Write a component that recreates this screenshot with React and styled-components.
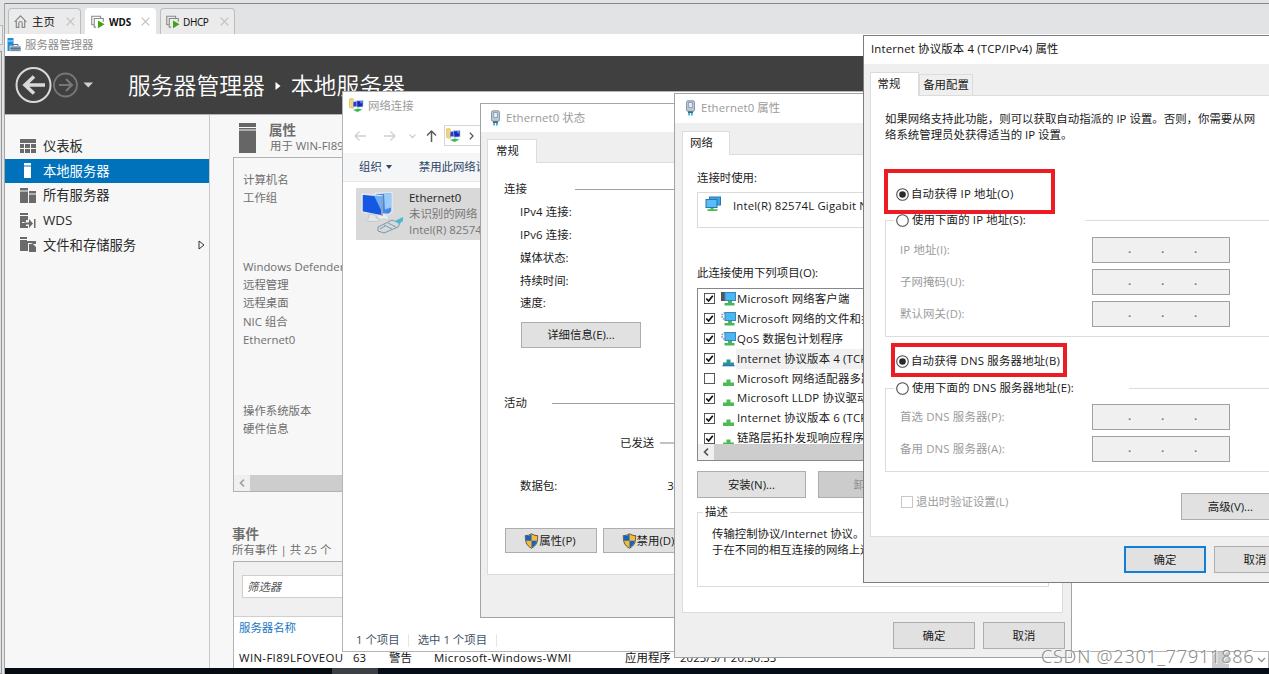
import React from "react";
import styled, { createGlobalStyle } from "styled-components";

const Global = createGlobalStyle`
  * {
    box-sizing: border-box;
  }

  body {
    margin: 0;
    overflow: hidden;
  }
`;

const Screen = styled.div`
  position: relative;
  display: flex;
  width: 1269px;
  height: 674px;
  overflow: hidden;
  background: #e2e3e5;
  color: #1a1a1a;
  font-family: "Open Sans", "Noto Sans CJK SC", sans-serif;
  font-size: 11.4px;
  line-height: 16px;
  white-space: nowrap;

  svg {
    display: block;
    flex: none;
  }
`;

/* ---------- shared ---------- */

const Text = styled.div`
  flex: none;
  height: 16px;
  line-height: 16px;
  margin-top: ${p => p.$mt || 0}px;
  margin-left: ${p => p.$ml || 0}px;
  color: ${p => p.$color || "inherit"};
  letter-spacing: ${p => p.$ls || 0}px;
`;

const Row = styled.div`
  display: flex;
  flex: none;
  align-items: ${p => p.$align || "flex-start"};
  height: ${p => (p.$h ? `${p.$h}px` : "auto")};
  margin-top: ${p => p.$mt || 0}px;
  padding-left: ${p => p.$pl || 0}px;
  gap: ${p => p.$gap || 0}px;
  letter-spacing: ${p => p.$ls || 0}px;
`;

const Button = styled.div`
  display: flex;
  flex: none;
  align-items: center;
  justify-content: center;
  width: ${p => p.$w}px;
  height: ${p => p.$h || 27}px;
  padding-right: ${p => p.$pr || 0}px;
  border: ${p => (p.$primary ? "2px solid #0f7fd8" : "1px solid #adadad")};
  background: ${p => (p.$disabled ? "#cccccc" : "#e1e1e1")};
  color: ${p => (p.$disabled ? "#8e8e8e" : "inherit")};
`;

const Window = styled.div`
  position: absolute;
  left: ${p => p.$x}px;
  top: ${p => p.$y}px;
  width: ${p => p.$w}px;
  height: ${p => p.$h}px;
  display: flex;
  flex-direction: column;
  border: 1px solid ${p => p.$edge || "#a3a3a3"};
  background: ${p => p.$bg || "#efefef"};
`;

const TitleBar = styled.div`
  display: flex;
  flex: none;
  align-items: center;
  gap: ${p => p.$gap || 6}px;
  height: ${p => p.$h}px;
  padding: 0 0 ${p => p.$pb || 0}px ${p => p.$pl}px;
  background: #fff;
  color: ${p => p.$color || "#9a9a9a"};
  letter-spacing: ${p => p.$ls || 0}px;
`;

const Tabs = styled.div`
  display: flex;
  flex: none;
  align-items: flex-end;
  height: ${p => p.$h}px;
  padding-left: ${p => p.$pl}px;
`;

const Tab = styled.div`
  display: flex;
  justify-content: center;
  align-items: center;
  position: relative;
  width: ${p => p.$w}px;
  height: ${p => p.$h || 24}px;
  margin-bottom: ${p => (p.$off ? 0 : -1)}px;
  padding: 0 ${p => p.$pr || 0}px ${p => (p.$off ? 0 : 2)}px 0;
  border: 1px solid #dcdcdc;
  border-bottom: 0;
  background: ${p => (p.$off ? "#efefef" : "#fff")};
`;

const Page = styled.div`
  display: flex;
  flex: none;
  flex-direction: column;
  width: ${p => p.$w}px;
  height: ${p => p.$h}px;
  margin-left: ${p => p.$ml}px;
  padding-left: ${p => p.$pl || 0}px;
  border: 1px solid #dcdcdc;
  background: #fff;
`;

const Rule = styled.div`
  flex: 1;
  height: ${p => p.$h || 1}px;
  margin-left: ${p => p.$ml}px;
  background: ${p => p.$color || "#a0a0a0"};
`;

const CheckBox = ({ on, faint, size = 12 }) =>
  <svg width={size} height={size} viewBox="0 0 12 12">
    <rect x="0.5" y="0.5" width="11" height="11" fill="#fff" stroke={faint ? "#c8c8c8" : "#4a4a4a"} />
    {on && <path d="M2.5 6l2.5 2.7L9.6 3" fill="none" stroke="#111" strokeWidth="1.9" />}
  </svg>;

const Radio = ({ on }) =>
  <svg width="13" height="13" viewBox="0 0 13 13">
    <circle cx="6.5" cy="6.5" r="5.8" fill="#fff" stroke="#4d4d4d" strokeWidth="1.1" />
    {on && <circle cx="6.5" cy="6.5" r="3.3" fill="#2a2a2a" />}
  </svg>;

const Shield = () =>
  <svg width="15" height="16" viewBox="0 0 14 16">
    <path d="M7 .7C5 2.2 3 2.6.8 2.6c0 6 .8 9.8 6.2 12.6 5.4-2.8 6.2-6.6 6.2-12.6C11 2.6 9 2.2 7 .7z" fill="#fbb92c" stroke="#555" />
    <path d="M7 1.4C5.2 2.6 3.3 3 1.3 3.1c0 1.8.1 3.400.400 4.600H7zM7 7.700h5.300c-.6 3.200-2 5.200-5.300 6.900z" fill="#1565c0" />
  </svg>;

const PlugIcon = () =>
  <svg width="11" height="16" viewBox="0 0 11 16">
    <rect x="1.5" y="0.8" width="8" height="10.5" rx="1.5" fill="#b9c7d6" stroke="#8797a9" />
    <rect x="3.7" y="2.5" width="3.6" height="5" fill="#e6edf3" stroke="#8496aa" strokeWidth=".8" />
    <path d="M3 11.3h5V13H3z" fill="#4b6378" />
    <path d="M3.2 13h1.8v2.5H3.2zM6 13h1.8v2.5H6z" fill="#35b4e4" />
  </svg>;

const NetFolder = () =>
  <svg width="15" height="15" viewBox="0 0 15 15">
    <path d="M.5 1l3-.8 1 1.2v9L.5 9.5z" fill="#f3d678" stroke="#d5b656" strokeWidth=".6" />
    <path d="M4 4l5-1.5v6L4 9z" fill="#2a3fc0" stroke="#cfd8e2" strokeWidth=".7" />
    <path d="M7.500 3l6.500-.5v6.300l-6 .4z" fill="#1528c4" stroke="#bcc8d6" strokeWidth=".7" />
    <path d="M11 3.200l2.500-.2-1.500 3z" fill="#62a8f3" />
    <path d="M4 12l5-1.500 4.500 1-5 2.500z" fill="#37b95a" />
  </svg>;

const NicIcon = () =>
  <svg width="16" height="16" viewBox="0 0 16 16">
    <rect x="4.5" y="1" width="11" height="8" fill="#3ea5ea" stroke="#2877b0" />
    <rect x="1" y="3.5" width="11" height="8" fill="#5bbcf7" stroke="#2877b0" />
    <path d="M5.5 12h3v1.200h4v1.800h-10v-1.800h3z" fill="#46bd55" />
  </svg>;

/* ---------- virtual machine console ---------- */

const Gutter = styled.div`
  display: flex;
  flex: none;
  flex-direction: column;
  width: 5px;
`;

const GutterTab = styled.div`
  width: 3px;
  height: 20px;
  margin-top: 25px;
  border: 1px solid #b7b8ba;
  border-left: 0;
  background: #ececec;
`;

const GutterPane = styled.div`
  flex: 1;
  width: 2px;
  margin-top: 6px;
  border: 1px solid #97989a;
  border-left: 0;
  background: #dfe1e4;
`;

const Console = styled.div`
  display: flex;
  flex: 1;
  flex-direction: column;
  margin-top: 3px;
  border-top: 1px solid #85868a;
  box-shadow: -1px 0 0 #a3a4a6;
`;

const ConsoleTabs = styled.div`
  display: flex;
  align-items: flex-end;
  gap: 4px;
  height: 30px;
  padding-left: 3px;
`;

const ConsoleTab = styled.div`
  display: flex;
  align-items: center;
  width: ${p => p.$w}px;
  height: 26px;
  padding: 0 5px;
  gap: ${p => p.$gap || 5}px;
  border: 1px solid ${p => (p.$active ? "#fff" : "#bcbdbf")};
  border-bottom: 0;
  border-radius: 4px 4px 0 0;
  background: ${p => (p.$active ? "#fff" : "#ebebec")};
  color: #111;
  font-size: ${p => p.$size || 11.4}px;
  font-family: "Noto Sans", "Noto Sans CJK SC", sans-serif;
  font-weight: ${p => (p.$active ? 700 : 400)};

  span {
    flex: 1;
    letter-spacing: ${p => p.$ls || 0}px;
  }
`;

const Close = () =>
  <svg width="9" height="9" viewBox="0 0 9 9">
    <path d="M.7.7l7.6 7.6M8.3.7L.7 8.300" stroke="#c0c0c0" strokeWidth="1.200" />
  </svg>;

const HomeIcon = () =>
  <svg width="13" height="13" viewBox="0 0 13 13" fill="none" stroke="#8a8a8a" strokeWidth="1.200">
    <path d="M.6 6.8L6.5.9l5.9 5.900M2.300 5.500v6.800h2.500V8c0-2 3.400-2 3.400 0v4.300h2.500V5.500" />
  </svg>;

const VmIcon = () =>
  <svg width="14" height="14" viewBox="0 0 15 14">
    <path d="M3 10H.8V.8h9.500V3M5.500 12.500h-2V3.300h9.700v3.500" fill="none" stroke="#8a8a8a" strokeWidth="1.200" />
    <path d="M7.500 5.300l7 4.200-7 4.200z" fill="#41a317" />
  </svg>;

const AppTitle = styled.div`
  display: flex;
  flex: none;
  align-items: center;
  height: 22px;
  padding-left: 2px;
  gap: 4px;
  background: #fff;
  color: #8c8c8c;
`;

const Banner = styled.div`
  display: flex;
  flex: none;
  align-items: center;
  height: 59px;
  padding-left: 9px;
  border-bottom: 1px solid #b5b5b5;
  background: #404040;
  color: #fff;
  font-size: 22.8px;
  font-weight: 350;
  line-height: 30px;
`;

const Crumb = styled.div`
  display: flex;
  align-items: center;
  margin-left: 34px;
  padding-top: 1px;
  gap: 10px;
`;

const Body = styled.div`
  display: flex;
  flex: 1;
  min-height: 0;
  background: #f7f7f7;
`;

const Sidebar = styled.div`
  display: flex;
  flex: none;
  flex-direction: column;
  width: 205px;
  padding-top: 19px;
  border-right: 1px solid #c9c9c9;
`;

const NavItem = styled.div`
  display: flex;
  align-items: center;
  flex: none;
  height: 24.6px;
  padding: 0 4px 0 15px;
  gap: 7px;
  background: ${p => (p.$active ? "#0072bc" : "transparent")};
  color: ${p => (p.$active ? "#fff" : "#2a2a2a")};
  font-size: 13.3px;

  span {
    flex: 1;
  }
`;

const Main = styled.div`
  display: flex;
  flex: 1;
  flex-direction: column;
  padding: 7px 0 0 23px;
  color: #6e6e6e;
`;

const Heading = styled.div`
  height: 16px;
  margin-left: -1px;
  font-size: 13.5px;
  font-weight: 700;
  line-height: 16px;
`;

const PropBox = styled.div`
  display: flex;
  flex: none;
  flex-direction: column;
  height: 335px;
  margin-top: 3px;
  border: 1px solid #b2b2b2;
`;

const PropList = styled.div`
  flex: 1;
  padding: 13px 0 0 9px;
  line-height: 18.2px;
`;

const Gap = styled.div`
  height: ${p => p.$h}px;
`;

const HScroll = styled.div`
  display: flex;
  flex: none;
  height: 16px;
  background: #cdcdcd;
`;

const ScrollEnd = styled.div`
  display: flex;
  align-items: center;
  justify-content: center;
  width: 16px;
  background: #f0f0f0;
`;

const ChevronLeft = ({ color = "#555" }) =>
  <svg width="6" height="8" viewBox="0 0 6 8">
    <path d="M5 .6L1.500 4 5 7.400" fill="none" stroke={color} strokeWidth="1.600" />
  </svg>;

const EventBox = styled.div`
  display: flex;
  flex: 1;
  flex-direction: column;
  margin-top: 3px;
  border: 1px solid #b2b2b2;
  border-bottom: 0;
  background: #fff;
`;

const Filter = styled.div`
  height: 55px;
  flex: none;
  padding: 13px 0 0 8px;
  border-bottom: 1px solid #cfcfcf;
  background: #f0f0f0;
`;

const FilterInput = styled.div`
  height: 23px;
  padding: 3px 4px;
  border: 1px solid #cfcfcf;
  background: #fff;
  color: #555;
  font-style: italic;
`;

const EventRow = styled.div`
  display: grid;
  grid-template-columns: 114px 36px 45px 191px 55px 532px auto;
  height: 18px;
  margin-top: 14px;
  padding-left: 5px;
  color: #111;

  span {
    letter-spacing: 0.05px;
  }

  span:nth-child(1),
  span:nth-child(4) {
    letter-spacing: 0.36px;
  }
`;

const ScrollThumb = styled.div`
  width: 17px;
  height: 18px;
  background: #cdcdcd;
`;

const Taskbar = styled.div`
  flex: none;
  height: 6px;
  background: linear-gradient(90deg, #050b10 0 327px, #3c4045 327px 373px, #050d18 373px);
`;

const navIcons = {
  board: <path d="M0 0h16v4H0zM0 5h4v4H0zM5 5h5v4H5zM11 5h5v4h-5zM0 10h4v4H0zM5 10h5v4H5zM11 10h5v4h-5z" />,
  local: <path d="M4 0h7v2.500H4zM4 3.500h7v11.500H4z" />,
  all: <path d="M0 0h8v2.500H0zM0 3.500h8v11.500H0zM9 3h7v2.500H9zM9 6.500h7v8.500H9z" />,
  wds: <path d="M0 0h8v2H0zM0 3h8v4H6v2H2v1h4v3h2v2H0zM4 9.500h5V6l4 4.500-4 4.500v-3.500H4zM14 6h1.500v9H14z" />,
  files: <path d="M0 0h7v2H0zM0 3h7v1h9v3h-3l-2-1H8v8H0zM9 7h4l3 3v5H9z" />
};

const nav = [
  ["board", "仪表板"],
  ["local", "本地服务器"],
  ["all", "所有服务器"],
  ["wds", "WDS"],
  ["files", "文件和存储服务"]
];

const ServerManager = () =>
  <Console>
    <ConsoleTabs>
      <ConsoleTab $w={73}><HomeIcon /><span>主页</span><Close /></ConsoleTab>
      <ConsoleTab $w={71} $active $size={9.9} $gap={4}><VmIcon /><span>WDS</span><Close /></ConsoleTab>
      <ConsoleTab $w={75} $size={10} $gap={3} $ls={-0.4}><VmIcon /><span>DHCP</span><Close /></ConsoleTab>
    </ConsoleTabs>
    <AppTitle>
      <svg width="14" height="14" viewBox="0 0 14 14">
        <path d="M.5 0h6v13h-6z" fill="#1e8fd6" />
        <path d="M.5 3h6" stroke="#bfe2f7" />
        <path d="M3 8h11v5.500H3z" fill="#7b93a8" stroke="#fff" strokeWidth=".6" />
        <path d="M6 8V6.500h5V8M3.500 10.500h10" fill="none" stroke="#5d7488" />
      </svg>
      服务器管理器
    </AppTitle>
    <Banner>
      <svg width="80" height="38" viewBox="0 0 80 38" fill="none">
        <circle cx="19.500" cy="19" r="17" stroke="#d9d9d9" strokeWidth="2" />
        <path d="M31 19H11M20 10.500l-9 8.500 9 8.500" stroke="#d9d9d9" strokeWidth="3.600" />
        <circle cx="51.500" cy="19" r="11.500" stroke="#777" strokeWidth="1.800" />
        <path d="M45 19h12.500M52 13l6 6-6 6" stroke="#777" strokeWidth="2.200" />
        <path d="M69.500 16.500h9.500l-4.700 5z" fill="#d0d0d0" />
      </svg>
      <Crumb>
        服务器管理器
        <svg width="6" height="8" viewBox="0 0 6 8"><path d="M.5 0l5 4-5 4z" fill="#fff" /></svg>
        本地服务器
      </Crumb>
    </Banner>
    <Body>
      <Sidebar>
        {nav.map(([icon, label]) =>
          <NavItem key={icon} $active={icon === "local"}>
            <svg width="16" height="15" viewBox="0 0 16 15" fill={icon === "local" ? "#fff" : "#6a6a6a"}>
              {navIcons[icon]}
            </svg>
            <span>{label}</span>
            {icon === "files" &&
              <svg width="7" height="10" viewBox="0 0 7 10">
                <path d="M1 1l5 4-5 4z" fill="none" stroke="#333" />
              </svg>}
          </NavItem>
        )}
      </Sidebar>
      <Main>
        <Row $pl={6} $gap={14}>
          <svg width="17" height="32" viewBox="0 0 17 32" fill="#666">
            <path d="M0 1h17v4H0zM0 6h17v1.500H0zM0 8.500h17V31H0z" />
          </svg>
          <div>
            <Heading>属性</Heading>
            <Text>用于 WIN-FI89LFOVEOU</Text>
          </div>
        </Row>
        <PropBox>
          <PropList>
            <div>计算机名</div>
            <div>工作组</div>
            <Gap $h={50.5} />
            <div>Windows Defender 防火墙</div>
            <div>远程管理</div>
            <div>远程桌面</div>
            <div>NIC 组合</div>
            <div>Ethernet0</div>
            <Gap $h={53} />
            <div>操作系统版本</div>
            <div>硬件信息</div>
          </PropList>
          <HScroll><ScrollEnd><ChevronLeft color="#a0a0a0" /></ScrollEnd></HScroll>
        </PropBox>
        <Gap $h={35} />
        <Heading>事件</Heading>
        <Text $ml={-1}>所有事件 | 共 25 个</Text>
        <EventBox>
          <Filter><FilterInput>筛选器</FilterInput></Filter>
          <Text $ml={5} $mt={3} $color="#1a76c4">服务器名称</Text>
          <EventRow>
            <span>WIN-FI89LFOVEOU</span>
            <span>63</span>
            <span>警告</span>
            <span>Microsoft-Windows-WMI</span>
            <span>应用程序</span>
            <span>2023/5/1 20:50:33</span>
            <ScrollThumb />
          </EventRow>
        </EventBox>
      </Main>
    </Body>
    <Taskbar />
  </Console>;

/* ---------- network connections ---------- */

const AddressBar = styled.div`
  display: flex;
  align-items: center;
  width: 600px;
  height: 21px;
  padding-left: 1px;
  gap: 8px;
  border: 1px solid #d5d5d5;
`;

const CommandBar = styled.div`
  display: flex;
  flex: none;
  align-items: center;
  height: 29px;
  margin-top: 7px;
  padding-left: 16px;
  border-bottom: 1px solid #e6e8ea;
  background: #f5f6f7;
  color: #2c4566;

  svg {
    margin: 0 27px 0 4px;
  }
`;

const Adapter = styled.div`
  display: flex;
  flex: none;
  width: 240px;
  height: 52px;
  margin: 6px 0 0 13px;
  padding: 2px 0 0 4px;
  gap: 6px;
  background: #d9d9d9;
  color: #777;
  letter-spacing: 0.12px;
`;

const StatusBar = styled.div`
  display: flex;
  align-items: center;
  height: 22px;
  margin-top: auto;
  padding-left: 13px;
  gap: 8.5px;
  color: #3f5069;
`;

const StatusSep = styled.div`
  width: 1px;
  height: 13px;
  background: #e6e6e6;
`;

const NetworkConnections = () =>
  <Window $x={342} $y={91} $w={960} $h={561} $bg="#fff" $edge="#b4b4b4">
    <TitleBar $h={27} $pl={6} $gap={4}><NetFolder />网络连接</TitleBar>
    <Row $align="center" $h={21} $mt={6} $pl={12}>
      <svg width="89" height="16" viewBox="0 0 89 16" fill="none" strokeWidth="1.300">
        <path d="M0 8h11M4.500 3.500L0 8l4.500 4.500M29 8h11M35.500 3.500L40 8l-4.500 4.500M54.500 6.500l3 3 3-3" stroke="#cfcfcf" />
        <path d="M76.500 14V3M72 7.500L76.500 3 81 7.500" stroke="#5c5c5c" strokeWidth="1.500" />
      </svg>
      <AddressBar>
        <NetFolder />
        <svg width="5" height="8" viewBox="0 0 5 8"><path d="M.8.6L4 4 .8 7.400" fill="none" stroke="#555" strokeWidth="1.300" /></svg>
      </AddressBar>
    </Row>
    <CommandBar>
      组织
      <svg width="6" height="4" viewBox="0 0 6 4"><path d="M0 0h6L3 4z" fill="#2c4566" /></svg>
      禁用此网络设备
    </CommandBar>
    <Adapter>
      <svg width="43" height="46" viewBox="0 0 43 46">
        <path d="M15 3.500l17-1v19l-3 3-13-1z" fill="#3f87ea" stroke="#e4e9ee" strokeWidth="1.500" />
        <path d="M24 4l7-.5v14l-6 2z" fill="#9accfb" />
        <path d="M16 24h9l5 5H19z" fill="#eceff1" stroke="#c3c7ca" strokeWidth=".6" />
        <path d="M2 4l20 2v20L2 22z" fill="#1558e2" stroke="#e3e8ee" strokeWidth="1.500" />
        <path d="M14 5.500l7 .8V20z" fill="#69b2f8" />
        <path d="M22 6v20" stroke="#707a86" />
        <path d="M9 24l7 1v3c5 1 5 3.500-2 3.500S3 29 9 28z" fill="#e4e7e9" stroke="#b4b9be" strokeWidth=".6" />
        <path d="M18 37l14-7 8 3-2 4-14 6-6-2z" fill="#d0dae0" stroke="#8496a5" />
        <path d="M24 35l8 4M28 33l8 4M20 39l5-3" stroke="#8596a4" />
        <path d="M35 31l8-4v4l-4 3z" fill="#4db7d2" />
      </svg>
      <div>
        <Text $color="#222">Ethernet0</Text>
        <Text>未识别的网络</Text>
        <Text>Intel(R) 82574L Gigabit</Text>
      </div>
    </Adapter>
    <StatusBar>
      1 个项目<StatusSep />选中 1 个项目<StatusSep />
    </StatusBar>
  </Window>;

/* ---------- Ethernet0 status ---------- */

const StatusDialog = () =>
  <Window $x={480} $y={103} $w={390} $h={515}>
    <TitleBar $h={28} $pl={9} $gap={5} $pb={1} $ls={0.1}><PlugIcon />Ethernet0 状态</TitleBar>
    <Tabs $h={30} $pl={6}><Tab $w={50} $pr={9}>常规</Tab></Tabs>
    <Page $w={376} $h={413} $ml={6} $pl={16}>
      <Row $mt={18} $align="center"><Text>连接</Text><Rule $ml={48} /></Row>
      <Text $ml={16} $mt={7} $ls={0.1}>IPv4 连接:</Text>
      <Text $ml={16} $mt={7} $ls={0.1}>IPv6 连接:</Text>
      <Text $ml={16} $mt={7}>媒体状态:</Text>
      <Text $ml={16} $mt={7}>持续时间:</Text>
      <Text $ml={16} $mt={6}>速度:</Text>
      <Row $mt={11} $pl={17}><Button $w={120} $h={26}>详细信息(E)...</Button></Row>
      <Row $mt={47} $align="center"><Text>活动</Text><Rule $ml={25} /></Row>
      <Row $mt={24} $pl={116} $align="center"><Text>已发送</Text><Rule $ml={6} $h={2} $color="#c2c2c2" /></Row>
      <Row $mt={27} $pl={16} $gap={110}><Text>数据包:</Text><Text>364</Text></Row>
      <Row $mt={34} $pl={1} $gap={6}>
        <Button $w={92} $h={25} $pr={2}><Shield />属性(P)</Button>
        <Button $w={92} $h={25} $pr={2}><Shield />禁用(D)</Button>
      </Row>
    </Page>
  </Window>;

/* ---------- Ethernet0 properties ---------- */

const AdapterBox = styled.div`
  display: flex;
  flex: none;
  width: 351px;
  height: 36px;
  margin-top: 6px;
  padding: 3px 0 0 7px;
  gap: 12px;
  border: 1px solid #dadada;
`;

const ListBox = styled.div`
  display: flex;
  flex: none;
  flex-direction: column;
  width: 351px;
  height: 173px;
  margin-top: 7px;
  border: 1px solid #828790;
`;

const ListRows = styled.div`
  flex: 1;
  overflow: hidden;
`;

const ListRow = styled.div`
  display: flex;
  align-items: center;
  height: 19.9px;
  padding-left: 6px;

  svg + svg {
    margin-left: 6px;
  }
`;

const ListLabel = styled.div`
  flex: 1;
  align-self: stretch;
  padding: 2px 0 0 1px;
  letter-spacing: 0.15px;
  background: ${p => (p.$selected ? "#f0f0f0" : "transparent")};
`;

const ClientIcon = ({ gear }) =>
  <svg width="15" height="17" viewBox="0 0 15 17">
    {gear
      ? <circle cx="4" cy="6" r="3" fill="none" stroke="#9aa4ac" strokeWidth="2" strokeDasharray="1.500 1" />
      : <path d="M0 2h5v9H0z" fill="#555" />}
    <rect x="4" y="2.500" width="10.500" height="8" fill="#4eb5f5" stroke="#3489bd" />
    <path d="M7 11h4v2h2.500v2.500h-10V13H7z" fill="#48b957" />
  </svg>;

const ProtocolIcon = ({ selected }) =>
  <svg width="15" height="17" viewBox="0 0 15 17">
    <path d="M5.500 9.500h4v3H13V16H2v-3.500h3.500z" fill={selected ? "#2b9490" : "#4cba55"} />
    {selected && <path d="M1.500 15h12v1.300h-12z" fill="#2a6fc4" />}
  </svg>;

const GroupBox = styled.div`
  display: flex;
  flex: none;
  flex-direction: column;
  width: ${p => p.$w}px;
  height: ${p => p.$h}px;
  margin-top: ${p => p.$mt}px;
  border: 1px solid #dcdcdc;
`;

const Legend = styled.div`
  align-self: flex-start;
  display: flex;
  align-items: center;
  flex: none;
  height: 16px;
  width: ${p => (p.$w ? `${p.$w}px` : "auto")};
  margin: ${p => p.$mt || -9}px 0 0 ${p => p.$ml}px;
  padding: 0 2px;
  gap: 3px;
  background: #fff;
  letter-spacing: ${p => p.$ls || 0}px;
`;

const items = [
  ["client", "Microsoft 网络客户端"],
  ["gear", "Microsoft 网络的文件和打印机共享"],
  ["gear", "QoS 数据包计划程序"],
  ["selected", "Internet 协议版本 4 (TCP/IPv4)"],
  ["off", "Microsoft 网络适配器多路传送器协议"],
  ["protocol", "Microsoft LLDP 协议驱动程序"],
  ["protocol", "Internet 协议版本 6 (TCP/IPv6)"],
  ["protocol", "链路层拓扑发现响应程序"]
];

const PropertiesDialog = () =>
  <Window $x={674} $y={93} $w={398} $h={565}>
    <TitleBar $h={29} $pl={10} $gap={5} $pb={2} $ls={0.1}><PlugIcon />Ethernet0 属性</TitleBar>
    <Tabs $h={31} $pl={7}><Tab $w={48} $pr={9}>网络</Tab></Tabs>
    <Page $w={381} $h={459} $ml={7} $pl={14}>
      <Text $mt={15}>连接时使用:</Text>
      <AdapterBox><NicIcon /><Text $mt={2} $ls={0.17}>Intel(R) 82574L Gigabit Network</Text></AdapterBox>
      <Text $mt={37}>此连接使用下列项目(O):</Text>
      <ListBox>
        <ListRows>
          {items.map(([kind, label]) =>
            <ListRow key={label}>
              <CheckBox on={kind !== "off"} size={11} />
              {kind === "client" || kind === "gear"
                ? <ClientIcon gear={kind === "gear"} />
                : <ProtocolIcon selected={kind === "selected"} />}
              <ListLabel $selected={kind === "selected"}>{label}</ListLabel>
            </ListRow>
          )}
        </ListRows>
        <HScroll><ScrollEnd><ChevronLeft /></ScrollEnd></HScroll>
      </ListBox>
      <Row $mt={10} $gap={12}>
        <Button $w={109}>安装(N)...</Button>
        <Button $w={109} $disabled>卸载(U)</Button>
      </Row>
      <GroupBox $w={352} $h={75} $mt={14}>
        <Legend $ml={5}>描述</Legend>
        <Text $ml={14} $mt={6}>传输控制协议/Internet 协议。该协议是默认的广域网络协议，用</Text>
        <Text $ml={14}>于在不同的相互连接的网络上通信。</Text>
      </GroupBox>
    </Page>
    <Row $mt={9} $pl={218} $gap={8}>
      <Button $w={82}>确定</Button>
      <Button $w={82}>取消</Button>
    </Row>
  </Window>;

/* ---------- IPv4 properties ---------- */

const Field = styled.div`
  display: flex;
  flex: none;
  align-items: center;
  justify-content: space-between;
  width: 344px;
  height: 26px;
  margin-top: ${p => p.$mt}px;
  padding-left: 14px;
  color: #9b9b9b;
  letter-spacing: 0.15px;
`;

const IpInput = styled.div`
  display: flex;
  width: 138px;
  height: 26px;
  padding: 3px 0 0 35px;
  border: 1px solid #a0a0a0;
  background: #f0f0f0;
  color: #777;
  font-weight: 700;

  span {
    width: 33px;
  }
`;

const Highlight = styled.div`
  position: absolute;
  left: ${p => p.$x}px;
  top: ${p => p.$y}px;
  width: ${p => p.$w}px;
  height: ${p => p.$h}px;
  border: 4px solid #ed1c24;
`;

const IpField = ({ label, mt }) =>
  <Field $mt={mt}>
    {label}
    <IpInput><span>.</span><span>.</span><span>.</span></IpInput>
  </Field>;

const Ipv4Dialog = () =>
  <Window $x={863} $y={35} $w={430} $h={548} $edge="#7d7d7d">
    <TitleBar $h={28} $pl={7} $pb={2} $ls={0.16} $color="#111">Internet 协议版本 4 (TCP/IPv4) 属性</TitleBar>
    <Tabs $h={31} $pl={6}>
      <Tab $w={49} $pr={11}>常规</Tab>
      <Tab $w={54} $h={21} $off>备用配置</Tab>
    </Tabs>
    <Page $w={415} $h={442} $ml={6} $pl={14}>
      <Text $mt={15} $ls={0.03}>如果网络支持此功能，则可以获取自动指派的 IP 设置。否则，你需要从网</Text>
      <Text $ls={0.03}>络系统管理员处获得适当的 IP 设置。</Text>
      <Row $mt={43} $h={16} $pl={11} $gap={2} $ls={0.2} $align="center"><Radio on />自动获得 IP 地址(O)</Row>
      <GroupBox $w={396} $h={117} $mt={18}>
        <Legend $ml={8} $w={191} $ls={0.15}><Radio />使用下面的 IP 地址(S):</Legend>
        <IpField label="IP 地址(I):" mt={9} />
        <IpField label="子网掩码(U):" mt={6} />
        <IpField label="默认网关(D):" mt={6} />
      </GroupBox>
      <Row $mt={16} $h={16} $pl={11} $gap={2} $ls={0.2} $align="center"><Radio on />自动获得 DNS 服务器地址(B)</Row>
      <GroupBox $w={396} $h={84} $mt={19}>
        <Legend $ml={8} $w={235} $ls={0.15}><Radio />使用下面的 DNS 服务器地址(E):</Legend>
        <IpField label="首选 DNS 服务器(P):" mt={8} />
        <IpField label="备用 DNS 服务器(A):" mt={6} />
      </GroupBox>
      <Row $mt={21} $pl={16}>
        <Row $mt={1} $gap={3} $align="center">
          <CheckBox faint />
          <Text $color="#9b9b9b">退出时验证设置(L)</Text>
        </Row>
        <Row $pl={173}><Button $w={98}>高级(V)...</Button></Row>
      </Row>
    </Page>
    <Row $mt={9} $pl={260} $gap={8}>
      <Button $w={82} $primary>确定</Button>
      <Button $w={82}>取消</Button>
    </Row>
  </Window>;

const Watermark = styled.div`
  position: absolute;
  left: 1041px;
  top: 644px;
  height: 24px;
  color: #8b8b8b;
  font-family: "Noto Sans", sans-serif;
  font-size: 18px;
  font-weight: 300;
  line-height: 24px;
  letter-spacing: 0.78px;
  text-shadow: 1px 1px 0 #fff;
`;

const ScrollHint = styled.div`
  position: absolute;
  left: 1257px;
  top: 657px;
`;

export default () =>
  <Screen>
    <Global />
    <Gutter>
      <GutterTab />
      <GutterPane />
    </Gutter>
    <ServerManager />
    <NetworkConnections />
    <StatusDialog />
    <PropertiesDialog />
    <Ipv4Dialog />
    <Highlight $x={884} $y={169} $w={171} $h={45} />
    <Highlight $x={891} $y={343} $w={176} $h={34} />
    <Watermark>CSDN @2301_77911886</Watermark>
    <ScrollHint>
      <svg width="9" height="6" viewBox="0 0 9 6">
        <path d="M1 1l3.500 3.500L8 1" fill="none" stroke="#8f8f8f" strokeWidth="1.300" />
      </svg>
    </ScrollHint>
  </Screen>;
